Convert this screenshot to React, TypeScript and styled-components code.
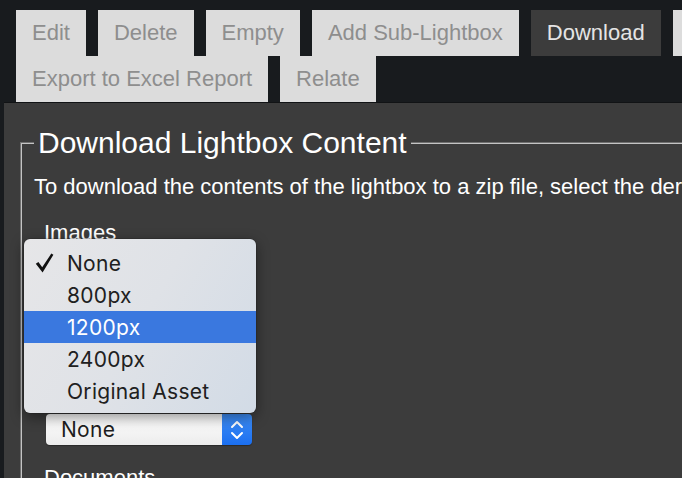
import React from 'react'
import styled, { createGlobalStyle } from 'styled-components'

const GlobalStyle = createGlobalStyle`
  html, body {
    margin: 0;
    background: #181b1e;
    overflow: hidden;
    font-family: "Liberation Sans", Arial, sans-serif;
  }
`

const Page = styled.div`
  width: 800px;
  height: 478px;
`

const TabBar = styled.div`
  display: flex;
  flex-wrap: wrap;
  column-gap: 12px;
  padding: 10px 0 0 16px;
  width: 770px;
`

const Tab = styled.div<{ $active?: boolean }>`
  display: flex;
  align-items: center;
  height: 46px;
  padding: 0 16px;
  font-size: 22px;
  background: ${({ $active }) => ($active ? '#3c3c3c' : '#dcdcdc')};
  color: ${({ $active }) => ($active ? '#e4e4e4' : '#8e8e8e')};
`

const Panel = styled.div`
  margin-left: 4px;
  border-top: 1px solid #111315;
  background: #3c3c3c;
  padding: 23px 0 0 16px;
  height: 400px;
`

const Fieldset = styled.fieldset`
  margin: 0;
  padding: 0 12px;
  border: 2px groove #c4c4c4;
  width: 900px;
  height: 600px;
`

const Legend = styled.legend`
  padding: 0 4px;
  font-size: 30px;
  line-height: 34px;
  color: #ffffff;
`

const Intro = styled.p`
  margin: 14px 0 0;
  font-size: 22px;
  line-height: 26px;
  color: #ffffff;
  white-space: nowrap;
`

const Field = styled.div`
  position: relative;
  margin: 20px 0 0 10px;
`

const FieldLabel = styled.div`
  font-size: 22px;
  line-height: 26px;
  color: #ffffff;
`

const Select = styled.div`
  display: flex;
  margin: 168px 0 0 2px;
  width: 206px;
  height: 31px;
  border-radius: 4px;
  overflow: hidden;
  box-shadow: 0 1px 1px rgba(0, 0, 0, 0.3);
`

const SelectValue = styled.div`
  flex: 1;
  display: flex;
  align-items: center;
  padding-left: 15px;
  background: linear-gradient(#ffffff, #ececec);
  font-family: Inter, "Liberation Sans", sans-serif;
  font-size: 21px;
  letter-spacing: 0.3px;
  color: #1e1e1e;
`

const Stepper = styled.div`
  display: flex;
  align-items: center;
  justify-content: center;
  width: 30px;
  background: linear-gradient(#3f8ff7, #1b6ff0);
`

const Menu = styled.div`
  position: absolute;
  left: -20px;
  top: 19px;
  width: 232px;
  padding: 8px 0 6px;
  border-radius: 6px;
  background: linear-gradient(120deg, #e6e6e8 0%, #dfe2e7 50%, #d2dbe6 100%);
  box-shadow: 0 4px 14px rgba(0, 0, 0, 0.45), 0 0 0 0.5px rgba(0, 0, 0, 0.25);
`

const MenuItem = styled.div<{ $highlighted?: boolean }>`
  display: flex;
  align-items: center;
  height: 32px;
  padding-left: 43px;
  position: relative;
  font-family: Inter, "Liberation Sans", sans-serif;
  font-size: 21px;
  letter-spacing: 0.3px;
  background: ${({ $highlighted }) => ($highlighted ? '#3a78df' : 'transparent')};
  color: ${({ $highlighted }) => ($highlighted ? '#ffffff' : '#202020')};
`

const Check = styled.svg`
  position: absolute;
  left: 11px;
  top: 6px;
`

const options = ['None', '800px', '1200px', '2400px', 'Original Asset']

const App = () => {
  return (
    <Page>
      <GlobalStyle />
      <TabBar>
        <Tab>Edit</Tab>
        <Tab>Delete</Tab>
        <Tab>Empty</Tab>
        <Tab>Add Sub-Lightbox</Tab>
        <Tab $active>Download</Tab>
        <Tab>Email</Tab>
        <Tab>Export to Excel Report</Tab>
        <Tab>Relate</Tab>
      </TabBar>
      <Panel>
        <Fieldset>
          <Legend>Download Lightbox Content</Legend>
          <Intro>To download the contents of the lightbox to a zip file, select the derivative sizes below.</Intro>
          <Field>
            <FieldLabel>Images</FieldLabel>
            <Select>
              <SelectValue>None</SelectValue>
              <Stepper>
                <svg width="14" height="22" viewBox="0 0 14 22" fill="none" stroke="#fff" strokeWidth="2" strokeLinecap="round" strokeLinejoin="round">
                  <path d="M2 8 L7 3 L12 8" />
                  <path d="M2 14 L7 19 L12 14" />
                </svg>
              </Stepper>
            </Select>
            <Menu>
              {options.map((o, i) => (
                <MenuItem key={o} $highlighted={i === 2}>
                  {i === 0 && (
                    <Check width="19" height="20" viewBox="0 0 19 20">
                      <path d="M0.8 10.8 L3.4 9 L7.2 14.2 L16.3 0.6 L18.4 1.8 L7.6 19.4 Z" fill="#111" />
                    </Check>
                  )}
                  {o}
                </MenuItem>
              ))}
            </Menu>
          </Field>
          <Field>
            <FieldLabel>Documents</FieldLabel>
          </Field>
        </Fieldset>
      </Panel>
    </Page>
  )
}

export default App
